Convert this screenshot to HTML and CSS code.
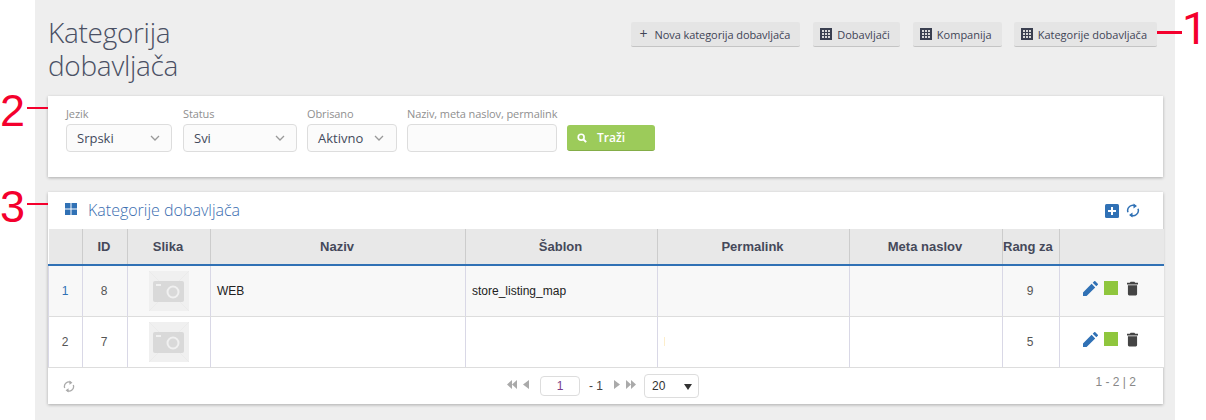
FILE: index.html
```html
<!DOCTYPE html>
<html lang="sr">
<head>
<meta charset="utf-8">
<title>Kategorija dobavljača</title>
<link rel="stylesheet" href="styles.css">
</head>
<body>
<svg class="defs" width="0" height="0" aria-hidden="true">
  <symbol id="grid" viewBox="0 0 12 12"><path fill="#3a3f50" d="M0 0h12v12H0z"/><path fill="#d8d8d8" d="M2 2h2v2H2zM5 2h2v2H5zM8 2h2v2H8zM2 5h2v2H2zM5 5h2v2H5zM8 5h2v2H8zM2 8h2v2H2zM5 8h2v2H5zM8 8h2v2H8z"/></symbol>
  <symbol id="cam" viewBox="0 0 40 40"><path fill="#f0f0f0" d="M0 0h40v40H0z"/><path stroke="#ebebeb" d="M0 0l40 40M40 0L0 40"/><path fill="#d9d9d9" d="M6 10h27a2 2 0 0 1 2 2v17a2 2 0 0 1-2 2H6a2 2 0 0 1-2-2V12a2 2 0 0 1 2-2z"/><path fill="#f0f0f0" d="M7 13h5v2H7z"/><circle cx="24" cy="21" r="5.500" fill="none" stroke="#f0f0f0" stroke-width="2"/></symbol>
  <symbol id="pencil" viewBox="0 0 15 15"><path fill="#3071b5" d="M0 15v-3.600L8.600 2.800l3.600 3.600L3.600 15zM9.700 1.700 11.200.2a.8.8 0 0 1 1.100 0l2.500 2.500a.8.8 0 0 1 0 1.100l-1.500 1.500z"/></symbol>
  <symbol id="trash" viewBox="0 0 12 15"><path fill="#444" d="M4 0h4l1 1.300h3V3H0V1.300h3zM1 4h10v9.600A1.400 1.400 0 0 1 9.600 15H2.400A1.400 1.400 0 0 1 1 13.600z"/></symbol>
  <symbol id="sync" viewBox="0 0 14 14"><path fill="none" stroke="currentColor" stroke-width="1.500" d="M2 8.800A5.200 5.200 0 0 1 9.500 2.500M12 5.200A5.200 5.200 0 0 1 4.500 11.500"/><path fill="currentColor" d="M7.500 0v5l3.500-2.500zM6.500 9v5L3 11.500z"/></symbol>
</svg>
<main class="page">
  <header class="top">
    <h1 class="title">Kategorija<br>dobavljača</h1>
    <nav class="actions">
      <a class="btn btn-new"><span class="plus">+</span>Nova kategorija dobavljača</a>
      <a class="btn"><svg class="ico"><use href="#grid"/></svg>Dobavljači</a>
      <a class="btn"><svg class="ico"><use href="#grid"/></svg>Kompanija</a>
      <a class="btn btn-last"><svg class="ico"><use href="#grid"/></svg>Kategorije dobavljača</a>
    </nav>
  </header>

  <section class="card filters">
    <div class="field f1"><label>Jezik</label><div class="select">Srpski<svg class="chev" viewBox="0 0 10 6"><path d="M1 1l4 4 4-4"/></svg></div></div>
    <div class="field f2"><label>Status</label><div class="select">Svi<svg class="chev" viewBox="0 0 10 6"><path d="M1 1l4 4 4-4"/></svg></div></div>
    <div class="field f3"><label>Obrisano</label><div class="select">Aktivno<svg class="chev" viewBox="0 0 10 6"><path d="M1 1l4 4 4-4"/></svg></div></div>
    <div class="field f4"><label>Naziv, meta naslov, permalink</label><div class="input"></div></div>
    <button class="search"><svg class="lens" viewBox="0 0 12 12"><circle cx="5" cy="5" r="3.500" fill="none" stroke="#fff" stroke-width="2"/><path d="M7.500 7.500 11 11" stroke="#fff" stroke-width="2.400"/></svg>Traži</button>
  </section>

  <section class="card grid-card">
    <div class="card-head">
      <svg class="win" viewBox="0 0 12 12"><path fill="#3071b5" d="M0 0h5.500v5.500H0zM6.500 0H12v5.500H6.500zM0 6.500h5.500V12H0zM6.500 6.500H12V12H6.500z"/></svg>
      <h2 class="card-title">Kategorije dobavljača</h2>
      <div class="tools">
        <svg class="add" viewBox="0 0 14 14"><rect width="14" height="14" rx="1.500" fill="#3071b5"/><path d="M3 7h8M7 3v8" stroke="#fff" stroke-width="2"/></svg>
        <svg class="sync-blue"><use href="#sync"/></svg>
      </div>
    </div>
    <table class="tbl">
      <colgroup><col class="c0"><col class="c1"><col class="c2"><col class="c3"><col class="c4"><col class="c5"><col class="c6"><col class="c7"><col class="c8"></colgroup>
      <thead><tr><th></th><th>ID</th><th>Slika</th><th>Naziv</th><th>Šablon</th><th>Permalink</th><th>Meta naslov</th><th class="rang">Rang za</th><th></th></tr></thead>
      <tbody>
        <tr class="odd"><td class="ctr idx link">1</td><td class="ctr">8</td><td class="ctr"><svg class="thumb"><use href="#cam"/></svg></td><td>WEB</td><td>store_listing_map</td><td></td><td></td><td class="ctr">9</td><td class="ops"><svg class="op"><use href="#pencil"/></svg><span class="sq"></span><svg class="op tr"><use href="#trash"/></svg></td></tr>
        <tr><td class="ctr idx">2</td><td class="ctr">7</td><td class="ctr"><svg class="thumb"><use href="#cam"/></svg></td><td></td><td></td><td><span class="tick"></span></td><td></td><td class="ctr">5</td><td class="ops"><svg class="op"><use href="#pencil"/></svg><span class="sq"></span><svg class="op tr"><use href="#trash"/></svg></td></tr>
      </tbody>
    </table>
    <footer class="pager">
      <svg class="sync-gray"><use href="#sync"/></svg>
      <div class="pages">
        <svg class="arrows" viewBox="0 0 22 9"><path d="M5 0v9L0 4.500zM10 0v9L5 4.500zM22 0v9l-6-4.500z"/></svg>
        <span class="pg-input">1</span>
        <span class="pg-total">- 1</span>
        <svg class="arrows" viewBox="0 0 22 9"><path d="M0 0v9l6-4.500zM12 0v9l5-4.500zM17 0v9l5-4.500z"/></svg>
        <span class="pg-size">20<i class="caret"></i></span>
      </div>
      <span class="range">1 - 2 | 2</span>
    </footer>
  </section>
</main>

<div class="mark m1"><span class="dash"></span><span class="num">1</span></div>
<div class="mark m2"><span class="num">2</span><span class="dash"></span></div>
<div class="mark m3"><span class="num">3</span><span class="dash"></span></div>
</body>
</html>
```
FILE: styles.css
```css
* { box-sizing: border-box; }
html, body { margin: 0; height: 420px; overflow: hidden; background: #fff; }
body { position: relative; font-family: "Open Sans", sans-serif; color: #3a3f50; }
.defs { position: absolute; }

.page { margin-left: 35px; width: 1140px; height: 420px; background: #eee; padding: 0 12px 0 13px; }

.top { display: flex; justify-content: space-between; height: 96px; padding-top: 16px; }
.title { margin: 0; font: 300 28px/33px "Open Sans", sans-serif; color: #4a5064; letter-spacing: -.3px; }
.actions { display: flex; gap: 13px; padding: 6px 6px 0 0; align-items: flex-start; }
.btn { display: flex; align-items: center; height: 25px; padding: 0 10px 0 7px; background: #e5e5e5; border-radius: 2px; border-bottom: 1px solid #c4c4c4; font-size: 11px; color: #3f4456; white-space: nowrap; }
.btn-new { letter-spacing: -.08px; }
.btn-last { margin-left: -1px; }
.plus { width: 17px; padding-left: 2px; font-size: 14px; line-height: 1; }
.ico { width: 12px; height: 12px; margin-right: 5px; }

.card { background: #fff; box-shadow: 0 1px 3px rgba(0, 0, 0, .28); }
.filters { display: flex; height: 81px; padding: 11px 0 0 18px; }
.field { display: flex; flex-direction: column; margin-right: 10px; }
.field label { font-size: 11px; line-height: 14px; height: 17px; color: #8f8f8f; white-space: nowrap; letter-spacing: -.1px; }
.f1 { width: 106px; margin-right: 11px; }
.f2 { width: 114px; }
.f3 { width: 90px; }
.f4 { width: 150px; }
.select, .input { display: flex; align-items: center; justify-content: space-between; height: 28px; padding: 0 11px 0 10px; background: #fbfbfb; border: 1px solid #ddd; border-radius: 4px; font-size: 13px; color: #444a5c; }
.f3 .select { padding: 0 12px 0 10px; }
.chev { width: 10px; height: 6px; fill: none; stroke: #999; stroke-width: 1.300; }
.search { display: flex; align-items: center; align-self: flex-start; width: 88px; height: 26px; margin: 18px 0 0 0; padding: 0 0 0 10px; border: 0; border-bottom: 1px solid #84ad48; border-radius: 3px; background: #9ccb5a; color: #fff; font: 600 12px "Open Sans", sans-serif; }
.lens { width: 10px; height: 10px; margin-right: 10px; }

.grid-card { height: 212px; margin-top: 15px; }
.card-head { display: flex; align-items: center; height: 37px; padding: 0 23px 0 17px; }
.win { width: 12px; height: 12px; margin: -3px 11px 0 0; }
.card-title { margin: -1px 0 0; font: 300 16px "Open Sans", sans-serif; color: #3a6db0; }
.tools { display: flex; align-items: center; gap: 7px; margin-left: auto; }
.add { width: 14px; height: 14px; }
.sync-blue { width: 14px; height: 15px; color: #3071b5; }

.tbl { width: 1115px; table-layout: fixed; border-collapse: collapse; font: 12px "Liberation Sans", sans-serif; }
.c0 { width: 34px; } .c1 { width: 45px; } .c2 { width: 83px; } .c3 { width: 255px; } .c4 { width: 192px; } .c5 { width: 192px; } .c6 { width: 153px; } .c7 { width: 57px; } .c8 { width: 104px; }
.tbl th { height: 36px; background: #e8e8e8; border-left: 1px solid #ccc; border-bottom: 2px solid #3071b5; font-size: 13px; font-weight: bold; color: #45495a; padding: 0 2px 0 0; white-space: nowrap; overflow: hidden; }
.tbl th:first-child { border-left: 0; }
.tbl th.rang { padding: 0; text-align: left; }
.tbl td { height: 51px; padding: 0 0 0 6px; border-left: 1px solid #d9d8e6; border-bottom: 1px solid #ddd; color: #222; background: #fff; }
.tbl td:first-child { border-left: 1px solid #d9d8e6; }
.tbl .odd td { background: #f8f8f8; }
.tbl td.ctr { text-align: center; padding: 0 2px 0 0; color: #555; }
.tbl td.idx { padding: 0 1px 0 0; }
.tbl td.link { color: #3071b5; }
.thumb { display: block; width: 40px; height: 40px; margin: 0 auto; transform: translateX(1px); }
.ops { white-space: nowrap; }
.tbl td.ops { padding: 0 0 5px 23px; }
.op { display: inline-block; width: 15px; height: 15px; vertical-align: middle; }
.op.tr { width: 11px; margin-left: 9px; }
.sq { display: inline-block; width: 14px; height: 14px; margin-left: 6px; background: #8fc63d; vertical-align: middle; }
.tick { display: block; width: 1px; height: 9px; background: #fdeecb; }

.pager { position: relative; display: flex; align-items: center; justify-content: space-between; height: 37px; padding: 0 27px 0 15px; font: 12px "Liberation Sans", sans-serif; color: #555; }
.sync-gray { width: 12px; height: 13px; color: #aaa; }
.pages { position: absolute; left: 459px; top: 6px; display: flex; align-items: center; }
.arrows { width: 22px; height: 9px; fill: #aaa; margin-top: -3px; }
.pg-input { width: 40px; height: 20px; margin: 0 9px 0 11px; border: 1px solid #ddd; border-radius: 4px; text-align: center; line-height: 19px; color: #7a3b8a; }
.pg-total { width: 13px; margin-right: 12px; color: #444; white-space: nowrap; }
.pg-size { position: relative; width: 55px; height: 24px; margin-left: 8px; padding-left: 7px; border: 1px solid #ddd; border-radius: 4px; line-height: 23px; color: #333; }
.caret { position: absolute; right: 6px; top: 9px; border: 4px solid transparent; border-top: 6px solid #333; border-bottom: 0; }
.range { color: #888; margin-top: -9px; }

.mark { position: absolute; display: flex; align-items: center; color: #f4002d; font: 45px/1 "Liberation Sans", sans-serif; }
.dash { display: block; height: 2px; background: #f4002d; }
.m1 { left: 1157px; top: 6px; font-family: Roboto, sans-serif; }
.m1 .dash { width: 25px; height: 3px; margin-top: 7px; }
.m2 { left: 0; top: 88px; }
.m2 .dash { width: 21px; margin: -5px 0 0 2px; }
.m3 { left: 0; top: 184px; }
.m3 .dash { width: 21px; margin: -5px 0 0 2px; }
```
